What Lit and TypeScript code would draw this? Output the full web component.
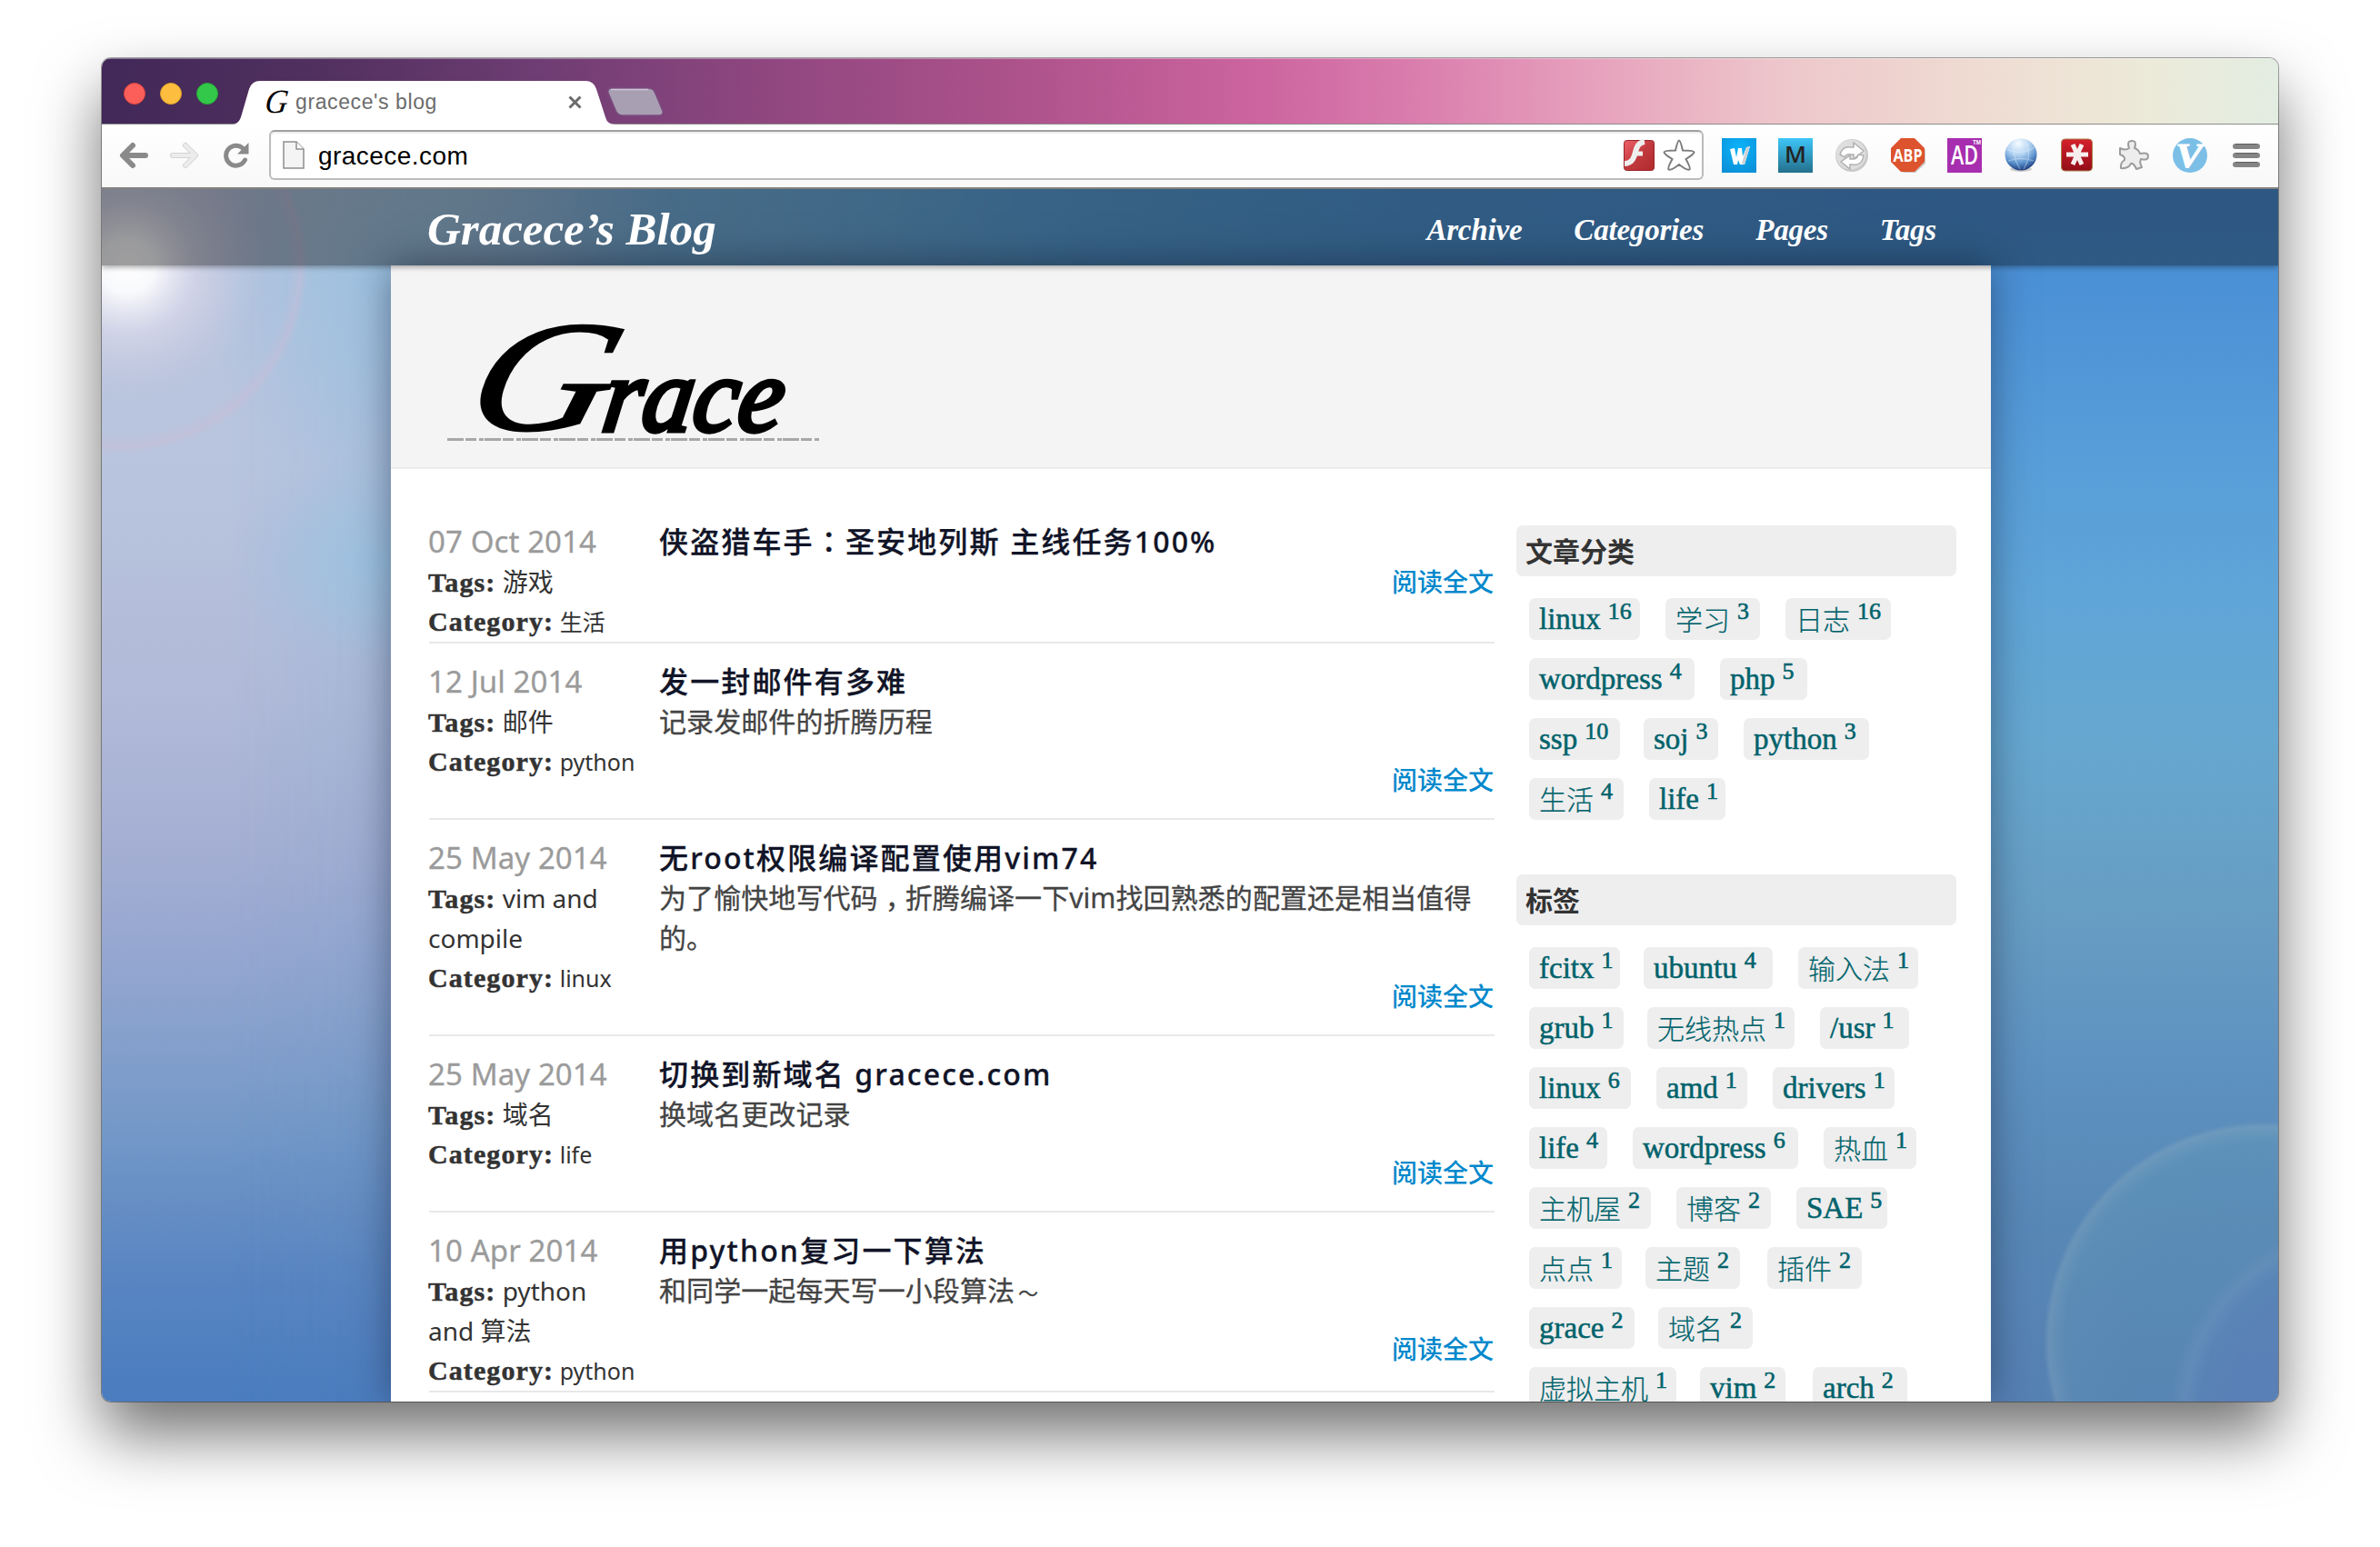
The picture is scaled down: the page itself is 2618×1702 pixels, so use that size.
import { LitElement, html, css, svg } from 'lit';
import { customElement, property } from 'lit/decorators.js';

interface Post {
  date: string;
  tags: string;
  category: string;
  title: string;
  excerpt: string;
}

/** label, count, pill width, space before the pill */
type Pill = [string, number, number, number];

const POSTS: Post[] = [
  { date: '07 Oct 2014', tags: '游戏', category: '生活', title: '侠盗猎车手：圣安地列斯 主线任务100%', excerpt: '' },
  { date: '12 Jul 2014', tags: '邮件', category: 'python', title: '发一封邮件有多难', excerpt: '记录发邮件的折腾历程' },
  {
    date: '25 May 2014', tags: 'vim and compile', category: 'linux', title: '无root权限编译配置使用vim74',
    excerpt: '为了愉快地写代码，折腾编译一下vim找回熟悉的配置还是相当值得的。',
  },
  { date: '25 May 2014', tags: '域名', category: 'life', title: '切换到新域名 gracece.com', excerpt: '换域名更改记录' },
  { date: '10 Apr 2014', tags: 'python and 算法', category: 'python', title: '用python复习一下算法', excerpt: '和同学一起每天写一小段算法～' },
];

const CATEGORIES: Pill[][] = [
  [['linux', 16, 122, 0], ['学习', 3, 104, 28], ['日志', 16, 116, 28]],
  [['wordpress', 4, 182, 0], ['php', 5, 96, 28]],
  [['ssp', 10, 100, 0], ['soj', 3, 82, 26], ['python', 3, 138, 28]],
  [['生活', 4, 104, 0], ['life', 1, 84, 28]],
];

const TAGS: Pill[][] = [
  [['fcitx', 1, 100, 0], ['ubuntu', 4, 142, 26], ['输入法', 1, 132, 28]],
  [['grub', 1, 104, 0], ['无线热点', 1, 162, 26], ['/usr', 1, 98, 28]],
  [['linux', 6, 112, 0], ['amd', 1, 100, 28], ['drivers', 1, 134, 28]],
  [['life', 4, 86, 0], ['wordpress', 6, 182, 28], ['热血', 1, 102, 28]],
  [['主机屋', 2, 134, 0], ['博客', 2, 104, 28], ['SAE', 5, 100, 28]],
  [['点点', 1, 102, 0], ['主题', 2, 104, 26], ['插件', 2, 104, 30]],
  [['grace', 2, 116, 0], ['域名', 2, 104, 26]],
  [['虚拟主机', 1, 162, 0], ['vim', 2, 94, 26], ['arch', 2, 104, 30]],
];

const PUNCT: Record<string, string> = { '：': 'colon', '，': 'comma', '～': 'tilde' };

/** Full-width colon, comma and tilde are set centred in their cell. */
const centred = (text: string) =>
  text.split(/([：，～])/).map((part) => (PUNCT[part] ? html`<span class=${PUNCT[part]}>${part}</span>` : part));

@customElement('browser-bar')
class BrowserBar extends LitElement {
  static styles = css`
    :host { display: block; font-family: "Liberation Sans", sans-serif; }
    svg { display: block; overflow: visible; }
    .strip {
      height: 73px; box-sizing: border-box; display: flex; align-items: flex-end;
      padding-left: 24px; border-top: 1px solid rgba(255, 255, 255, .35);
      background:
        linear-gradient(90deg, #412858 0, #51305f 10%, #6e3d73 20%, #914780 31%, #ad528b 42%, #cc649f 53%,
          #db80af 61%, #e7a3bd 69%, #edc6cb 77%, #efdbd2 86%, #ecead9 94%, #e3ede2 100%);
      border-bottom: 1px solid #8c8c8c;
    }
    .lights { display: flex; gap: 16px; align-self: center; padding-top: 4px; margin-right: 17px; }
    .light { width: 24px; height: 24px; border-radius: 50%; box-sizing: border-box; }
    .red { background: #fc5f5a; border: 1px solid #e0443f; }
    .yellow { background: #fdbe3f; border: 1px solid #dfa02c; }
    .green { background: #34c84a; border: 1px solid #25a837; }
    .tab { width: 420px; height: 48px; margin-bottom: -1px; display: grid; }
    .tab > * { grid-area: 1 / 1; }
    .tab-row { display: flex; align-items: center; padding: 0 37px 2px 34px; gap: 5px; position: relative; }
    .tab-title { font-size: 23px; color: #6c6c6c; flex: 1; letter-spacing: .6px; padding-top: 1px; }
    .new-tab { margin: 0 0 8px -9px; }
    .tools {
      height: 71px; box-sizing: border-box; display: flex; align-items: center; padding: 0 20px 2px 19px;
      background: linear-gradient(#fff, #f8f8f8); border-bottom: 2px solid #83827f;
    }
    .nav { display: flex; gap: 24px; width: 165px; }
    .reload { margin-left: 3px; }
    .url {
      flex: none; width: 1578px; height: 55px; box-sizing: border-box; border: 2px solid #bcbcbc; border-top-color: #a0a0a0;
      border-radius: 6px; background: #fff; box-shadow: inset 0 2px 2px #eee; display: flex; align-items: center; padding: 0 7px 0 13px;
    }
    .url-text { font-size: 28px; color: #000; flex: 1; margin-left: 15px; padding-top: 2px; letter-spacing: .45px; }
    .url-icons { display: flex; gap: 8px; }
    .extensions { display: flex; gap: 24px; margin-left: 20px; }
    .menu { margin-left: 28px; }
  `;

  render() {
    return html`
      <div class="strip">
        <div class="lights"><i class="light red"></i><i class="light yellow"></i><i class="light green"></i></div>
        <div class="tab">
          <svg width="420" height="48" viewBox="0 0 420 48">
            <path d="M0 48C7 46 8 40 10 33L17 9Q20 0 29 0H387Q396 0 399 9L409 40Q411 48 420 48Z" fill="#fff" />
          </svg>
          <div class="tab-row">
            <svg width="29" height="28" viewBox="0 0 29 28">
              <text x="0" y="26" font-family="Liberation Serif" font-style="italic" font-size="37" textLength="25" lengthAdjust="spacingAndGlyphs" transform="translate(3 0) skewX(-8)">G</text>
            </svg>
            <span class="tab-title">gracece's blog</span>
            <svg width="15" height="15" viewBox="0 0 15 15"><path d="M1.5 1.5L13.5 13.5M13.5 1.5L1.5 13.5" stroke="#6b6b6b" stroke-width="3" /></svg>
          </div>
        </div>
        <svg class="new-tab" width="62" height="32" viewBox="0 0 62 32">
          <path d="M5 1H45Q51 1 53 7L61 26Q62 31 57 31H17Q11 31 9 25L1 6Q0 1 5 1Z" fill="#a99fb3" stroke="#7a4d80" stroke-width="1.5" />
          <path d="M4 2.5H45" stroke="#d0c5d6" stroke-width="1.5" />
        </svg>
      </div>
      <div class="tools">
        <div class="nav">
          <svg width="32" height="28" viewBox="0 0 32 28"><path d="M15 3L4 14L15 25M5 14H29" fill="none" stroke="#8a8a8a" stroke-width="6" stroke-linecap="round" stroke-linejoin="round" /></svg>
          <svg width="32" height="28" viewBox="0 0 32 28"><path d="M17 3L28 14L17 25M27 14H3" fill="none" stroke="#d4d4d4" stroke-width="6" stroke-linecap="round" stroke-linejoin="round" /><path d="M17 3L28 14L17 25M27 14H3" fill="none" stroke="#ececec" stroke-width="4" stroke-linecap="round" stroke-linejoin="round" /></svg>
          <svg class="reload" width="28" height="28" viewBox="0 0 28 28"><path d="M23.5 19A11 11 0 1 1 21 6" fill="none" stroke="#8a8a8a" stroke-width="5" stroke-linecap="round" /><path d="M27.500 0V12.500H15Z" fill="#8a8a8a" /></svg>
        </div>
        <div class="url">
          <svg width="24" height="31" viewBox="0 0 24 31"><path d="M1 1H15L23 9V30H1Z" fill="#f4f4f5" stroke="#8e8e8e" stroke-width="1.500" /><path d="M15 1V9H23" fill="#fff" stroke="#8e8e8e" stroke-width="1.500" /></svg>
          <span class="url-text">gracece.com</span>
          <div class="url-icons">
            <svg width="36" height="36" viewBox="0 0 36 36">
              <defs><linearGradient id="fl" x1="0" y1="0" x2="1" y2="1"><stop offset="0" stop-color="#f0606a" /><stop offset=".5" stop-color="#c03a3e" /><stop offset="1" stop-color="#b02a2c" /></linearGradient></defs>
              <rect x="1.500" y="1.500" width="33" height="33" rx="3" fill="url(#fl)" stroke="#982528" />
              <path d="M24 3C15 4 15 12 12.500 19C10.500 25 7 27 2 27" fill="none" stroke="#eee" stroke-width="6" /><path d="M13 16H22" stroke="#eee" stroke-width="5" />
            </svg>
            <svg width="36" height="36" viewBox="0 0 36 36"><path d="M18 1.500Q19.500 1.500 22 12.500Q34.500 12.500 34.500 14.500Q34 17 25.500 22Q31 32 29.500 33.500Q27 35 18 28Q9 35 6.500 33.500Q5 32 10.500 22Q2 17 1.500 14.500Q1.500 12.500 14 12.500Q16.500 1.500 18 1.500Z" fill="#fff" stroke="#7b7b7b" stroke-width="2" /></svg>
          </div>
        </div>
        <div class="extensions">
          <svg width="38" height="38" viewBox="0 0 38 38">
            <defs><radialGradient id="w" cx=".5" cy=".3" r=".8"><stop offset="0" stop-color="#0bb4fb" /><stop offset="1" stop-color="#0a8fd6" /></radialGradient></defs>
            <rect width="38" height="38" fill="url(#w)" />
            <path d="M9 12L14 11L16 21L18 11H22L23 20L27 10L31 9L25 29L20 29L18 24L17 29H13Z" fill="#fff" /><path d="M27 10L31 9L25 29L22 28Z" fill="#ccd2d6" />
          </svg>
          <svg width="38" height="38" viewBox="0 0 38 38">
            <defs><linearGradient id="m" x2="0" y2="1"><stop offset="0" stop-color="#3ec6f8" /><stop offset="1" stop-color="#246f8c" /></linearGradient></defs>
            <rect width="38" height="38" fill="url(#m)" /><text x="19" y="27" text-anchor="middle" font-family="Open Sans" font-weight="600" font-size="26" fill="#222">M</text>
          </svg>
          <svg width="38" height="38" viewBox="0 0 38 38">
            <circle cx="19" cy="19" r="18" fill="#c9c9c9" /><circle cx="18" cy="18" r="16.500" fill="#dedede" />
            <path d="M6 18Q9 8 18 10H21V5L32 14L21 23V18H18Q13 17 11 21Z" fill="#fff" stroke="#b1b1b1" stroke-width="1.500" />
            <path d="M32 19Q30 31 19 29H17V34L7 26L17 19V23H20Q25 23 26 18Z" fill="#fff" stroke="#b1b1b1" stroke-width="1.500" />
          </svg>
          <svg width="38" height="38" viewBox="0 0 38 38">
            <path d="M12 2H27L38 13V28L27 38H14L2 27Z" fill="#c9c9c9" /><path d="M11 0H26L37 11V26L26 37H11L0 26V11Z" fill="#dc532d" />
            <text x="2.500" y="25.500" textLength="32" lengthAdjust="spacingAndGlyphs" font-family="Open Sans" font-weight="700" font-size="20" fill="#fff">ABP</text>
          </svg>
          <svg width="38" height="38" viewBox="0 0 38 38">
            <rect width="38" height="38" fill="#a72eae" />
            <text x="4" y="29" textLength="30" lengthAdjust="spacingAndGlyphs" font-family="Open Sans" font-weight="600" font-size="28" fill="#fff">AD</text>
            <text x="28" y="7" textLength="9" lengthAdjust="spacingAndGlyphs" font-family="Liberation Sans" font-weight="700" font-size="8" fill="#fff">TM</text>
          </svg>
          <svg width="38" height="38" viewBox="0 0 38 38">
            <defs><radialGradient id="g" cx=".42" cy=".15" r=".9"><stop offset="0" stop-color="#f6fbff" /><stop offset=".4" stop-color="#b4d4f2" /><stop offset=".7" stop-color="#5a90cc" /><stop offset="1" stop-color="#112a6c" /></radialGradient></defs>
            <ellipse cx="19" cy="34" rx="12" ry="3" fill="#ccc" /><circle cx="19" cy="18" r="17.500" fill="url(#g)" />
            <path d="M4 12Q18 20 34 10M5 25Q19 20 33 25M12 3Q8 18 18 34M24 3Q32 18 22 34" fill="none" stroke="#e5f2ff" stroke-opacity=".4" stroke-width="1.300" />
          </svg>
          <svg width="38" height="38" viewBox="0 0 38 38">
            <defs><linearGradient id="r" x2="0" y2="1"><stop offset="0" stop-color="#d51f2c" /><stop offset="1" stop-color="#930e18" /></linearGradient></defs>
            <rect x="1.500" y="1" width="34" height="35" rx="4" fill="url(#r)" stroke="#a98350" />
            <path d="M7 18H31M14 7L24 29M24 7L14 29" stroke="#f7eeee" stroke-width="5" />
          </svg>
          <svg width="38" height="38" viewBox="0 0 38 38">
            <path d="M14 11Q11 3 17 3Q23 3 20 11Q24 12 26 17Q35 15 35 20Q35 25 27 23Q25 26 28 32L22 34Q19 27 16 28Q13 34 5 33Q4 27 9 24Q10 20 4 18V11Q10 14 14 11Z" fill="#ededed" stroke="#9c9c9c" stroke-width="2" stroke-linejoin="round" />
          </svg>
          <svg width="38" height="38" viewBox="0 0 38 38">
            <circle cx="19" cy="19" r="19" fill="#7bbfe7" />
            <text x="3" y="32" textLength="30" lengthAdjust="spacingAndGlyphs" font-family="Liberation Serif" font-weight="700" font-style="italic" font-size="38" fill="#fff" stroke="#fff">V</text>
          </svg>
        </div>
        <svg class="menu" width="30" height="28" viewBox="0 0 30 28">
          ${[0, 10, 20].map((y) => svg`<rect x="0" y=${y + 1} width="30" height="6" rx="3" fill="#858585" /><path d=${`M3 ${y + 1.5}H27`} stroke="#606060" />`)}
        </svg>
      </div>`;
  }
}

@customElement('pill-box')
class PillBox extends LitElement {
  @property() heading = '';
  @property({ attribute: false }) rows: Pill[][] = [];

  static styles = css`
    :host { display: block; }
    .heading {
      height: 56px; border-radius: 7px; background: #eee; padding-left: 10px; margin-bottom: 24px;
      font: 600 30px/54px "Noto Sans CJK SC", sans-serif; color: #333;
    }
    .row { display: flex; height: 46px; margin: 0 0 20px 14px; }
    .pill {
      box-sizing: border-box; height: 46px; border-radius: 7px; background: #eee; padding-left: 11px;
      display: flex; gap: 8px; white-space: nowrap; color: #00626b; line-height: 46px;
      font-family: "Liberation Serif", "Noto Sans CJK SC", serif; font-size: 33px; -webkit-text-stroke: .5px #00626b;
    }
    .cjk { font-family: "Noto Sans CJK SC", sans-serif; font-weight: 300; font-size: 30px; line-height: 44px; padding-left: 11px; -webkit-text-stroke: .2px #00626b; }
    .count { font: 26px/30px "Liberation Serif", serif; -webkit-text-stroke: .6px #00626b; }
  `;

  render() {
    return html`
      <div class="heading">${this.heading}</div>
      ${this.rows.map((row) => html`<div class="row">${row.map(([label, count, width, gap]) => html`
        <a class="pill ${/[^\x00-\x7f]/.test(label) ? 'cjk' : ''}" style="width:${width}px;margin-left:${gap}px">${label}<span class="count">${count}</span></a>`)}</div>`)}`;
  }
}

@customElement('post-item')
class PostItem extends LitElement {
  @property({ attribute: false }) post!: Post;

  static styles = css`
    :host {
      display: flex; padding-top: 20px; border-bottom: 2px solid #e8e8e8; line-height: 44px;
      font-family: "Noto Sans", "Noto Sans CJK SC", sans-serif;
    }
    .meta { width: 226px; margin: 0 28px 0 -1px; flex: none; color: #333; font-size: 28px; }
    .date { font-size: 33px; letter-spacing: .1px; color: #9b9b9b; white-space: nowrap; -webkit-text-stroke: .3px #9b9b9b; }
    .field { font-size: 28px; }
    .category { font-size: 25px; white-space: nowrap; }
    strong { font: 700 30px/1 "Liberation Serif", serif; letter-spacing: 1.1px; -webkit-text-stroke: .5px #333; }
    .body { flex: 1; padding-bottom: 20px; }
    .title { font-size: 32px; font-weight: 500; letter-spacing: 2.15px; color: #111427; -webkit-text-stroke: .3px #111427; }
    .excerpt { font-size: 30px; letter-spacing: .08px; color: #444; -webkit-text-stroke: .3px #444; }
    .excerpt:not(:empty) { margin-bottom: 20px; }
    .more { text-align: right; font-size: 28px; color: #08c; font-weight: 500; padding-right: 1px; }
    .colon { font-family: "Noto Sans CJK TC", sans-serif; line-height: 1; }
    .comma { position: relative; left: 8px; }
    .tilde { font: 22px/1 "Noto Sans CJK SC", sans-serif; margin-left: 4px; }
  `;

  render() {
    const { date, tags, category, title, excerpt } = this.post;
    return html`
      <div class="meta">
        <div class="date">${date}</div>
        <div class="field"><strong>Tags:</strong> ${tags}</div>
        <div class="category"><strong>Category:</strong> ${category}</div>
      </div>
      <div class="body">
        <div class="title">${centred(title)}</div>
        <div class="excerpt">${excerpt ? centred(excerpt) : ''}</div>
        <div class="more">阅读全文</div>
      </div>`;
  }
}

@customElement('app-root')
class AppRoot extends LitElement {
  static styles = css`
    :host { display: block; width: 2618px; height: 1702px; box-sizing: border-box; padding: 64px 112px 0; background: #fff; overflow: hidden; }
    .window {
      width: 2394px; height: 1478px; border-radius: 10px; display: flex; flex-direction: column;
      box-shadow: 0 0 0 1px rgba(0,0,0,.35), 0 36px 70px rgba(0,0,0,.56);
    }
    browser-bar { border-radius: 10px 10px 0 0; overflow: hidden; flex: none; }
    .viewport {
      flex: 1; min-height: 0; overflow: hidden; border-radius: 0 0 10px 10px; position: relative; z-index: 0;
      background: linear-gradient(#b9c3dd 0, #b9c5de 22%, #b1bad8 42%, #a4aed3 55%, #8fa4cf 66%, #7599c8 77%, #5a86c2 89%, #4a7cbf 100%);
    }
    .viewport::before {
      content: ""; position: absolute; inset: 0; z-index: -1;
      background:
        linear-gradient(90deg, rgba(112,184,222,.75) 0, rgba(112,184,222,.6) 30%, rgba(90,160,215,.35) 60%, transparent 85%) 0 0 / 100% 90px no-repeat,
        linear-gradient(#4a8ed3 0, #4b91d5 8%, #569cd9 20%, #5fa5d8 33%, #66a7cf 46%, #679dc3 60%, #5e92c0 72%, #5888b6 85%, #5681b3 100%);
      mask-image: linear-gradient(90deg, transparent 6%, rgba(0,0,0,.12) 13%, rgba(0,0,0,.8) 26%, #000 45%);
    }
    .lens { position: absolute; inset: 0; z-index: -1; width: 2394px; height: 1334px; }
    .header {
      height: 84px; box-sizing: border-box; display: flex; align-items: center; padding: 0 374px 0 358px; position: relative; z-index: 2;
      background: rgba(0,0,0,.38); box-shadow: 0 2px 6px rgba(0,0,0,.35); color: #fff;
      font-family: "Liberation Serif", serif; font-weight: 700; font-style: italic;
    }
    .brand { font-size: 51px; flex: 1; padding-top: 3px; }
    .links { display: flex; gap: 57px; font-size: 33px; padding: 6px 2px 0 0; letter-spacing: -.2px; }
    .page { width: 1760px; height: 1250px; margin-left: 318px; background: #fff; box-shadow: 0 0 40px rgba(20,30,60,.5); }
    .banner { height: 224px; box-sizing: border-box; background: #f4f4f4; border-bottom: 2px solid #ececec; padding: 58px 0 0 62px; }
    .banner svg { display: block; overflow: visible; }
    .content { display: flex; gap: 24px; padding: 38px 38px 0 42px; }
    .posts { width: 1172px; flex: none; }
    .side { flex: 1; padding-top: 24px; display: flex; flex-direction: column; gap: 40px; }
  `;

  render() {
    return html`
      <div class="window">
        <browser-bar></browser-bar>
        <div class="viewport">
          <svg class="lens" viewBox="0 0 2394 1334">
            <defs>
              <radialGradient id="glow"><stop offset="0" stop-color="#fff" /><stop offset=".2" stop-color="#fff" stop-opacity=".9" /><stop offset=".5" stop-color="#ece6f2" stop-opacity=".45" /><stop offset="1" stop-color="#cfcbe2" stop-opacity="0" /></radialGradient>
              <radialGradient id="cyan"><stop offset="0" stop-color="#98c4e2" stop-opacity=".8" /><stop offset=".5" stop-color="#98c4e2" stop-opacity=".4" /><stop offset="1" stop-color="#98c4e2" stop-opacity="0" /></radialGradient>
              <radialGradient id="ring"><stop offset=".6" stop-color="#62a0b4" stop-opacity=".15" /><stop offset=".9" stop-color="#6aa5b8" stop-opacity=".2" /><stop offset=".975" stop-color="#8fb0c0" stop-opacity=".33" /><stop offset="1" stop-color="#8fb0c0" stop-opacity="0" /></radialGradient>
              <radialGradient id="inner"><stop offset=".7" stop-color="#5a78bc" stop-opacity=".4" /><stop offset=".85" stop-color="#5a78bc" stop-opacity=".25" /><stop offset=".93" stop-color="#7a98c4" stop-opacity=".25" /><stop offset="1" stop-color="#7a98c4" stop-opacity="0" /></radialGradient>
              <radialGradient id="halo"><stop offset=".9" stop-color="#cbbcd6" stop-opacity="0" /><stop offset=".965" stop-color="#cbbcd6" stop-opacity=".45" /><stop offset="1" stop-color="#cbbcd6" stop-opacity="0" /></radialGradient>
            </defs>
            <ellipse cx="330" cy="90" rx="220" ry="260" fill="url(#cyan)" />
            <ellipse cx="310" cy="410" rx="160" ry="120" fill="url(#cyan)" />
            <circle cx="28" cy="85" r="150" fill="url(#glow)" />
            <circle cx="20" cy="85" r="206" fill="url(#halo)" />
            <circle cx="2378" cy="1268" r="242" fill="url(#ring)" />
            <circle cx="2490" cy="1350" r="215" fill="url(#inner)" />
          </svg>
          <div class="header">
            <div class="brand">Gracece’s Blog</div>
            <div class="links"><a>Archive</a><a>Categories</a><a>Pages</a><a>Tags</a></div>
          </div>
          <div class="page">
            <div class="banner">
              <svg width="412" height="136" viewBox="492 350 412 136">
                <g font-family="Liberation Serif" font-style="italic" fill="#000" stroke="#000">
                  <text font-size="174" stroke-width="2" textLength="156" lengthAdjust="spacingAndGlyphs" transform="translate(507 473) skewX(-16)">G</text>
                  <text font-size="116" stroke-width="5" textLength="198" lengthAdjust="spacingAndGlyphs" transform="translate(660 474) skewX(-8)">race</text>
                </g>
                <path d="M492 483.500H902" stroke="#a8a8a8" stroke-width="3" stroke-dasharray="18 2 12 3 5 1" />
              </svg>
            </div>
            <div class="content">
              <div class="posts">${POSTS.map((post) => html`<post-item .post=${post}></post-item>`)}</div>
              <div class="side">
                <pill-box heading="文章分类" .rows=${CATEGORIES}></pill-box>
                <pill-box heading="标签" .rows=${TAGS}></pill-box>
              </div>
            </div>
          </div>
        </div>
      </div>`;
  }
}
